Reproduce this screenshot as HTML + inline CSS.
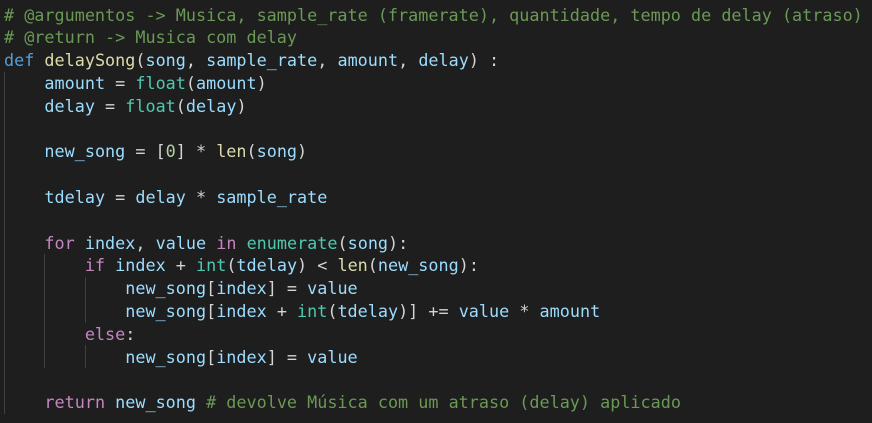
<!DOCTYPE html>
<html><head><meta charset="utf-8"><style>
html,body{margin:0;padding:0;background:#1e1e1e;width:872px;height:423px;overflow:hidden}
pre{margin:0;padding:3.6px 0 0 4px;font-family:"DejaVu Sans Mono","Liberation Mono",monospace;font-size:16.8px;line-height:22.8px;color:#d4d4d4;position:relative}
.c{color:#6a9955}.k{color:#569cd6}.f{color:#dcdcaa}.v{color:#9cdcfe}.b{color:#4ec9b0}.p{color:#c586c0}.n{color:#b5cea8}.y{color:#ffd700}
.g{position:absolute;width:1px;background:#404040}
</style></head><body>
<div class="g" style="left:4px;top:72px;height:342px"></div>
<div class="g" style="left:44px;top:254px;height:114px"></div>
<div class="g" style="left:85px;top:277px;height:46px"></div>
<div class="g" style="left:85px;top:345px;height:23px"></div>
<pre><span class="c"># @argumentos -&gt; Musica, sample_rate (framerate), quantidade, tempo de delay (atraso)</span>
<span class="c"># @return -&gt; Musica com delay</span>
<span class="k">def</span> <span class="f">delaySong</span>(<span class="v">song</span>, <span class="v">sample_rate</span>, <span class="v">amount</span>, <span class="v">delay</span>) :
    <span class="v">amount</span> = <span class="b">float</span>(<span class="v">amount</span>)
    <span class="v">delay</span> = <span class="b">float</span>(<span class="v">delay</span>)

    <span class="v">new_song</span> = [<span class="n">0</span>] * <span class="f">len</span>(<span class="v">song</span>)

    <span class="v">tdelay</span> = <span class="v">delay</span> * <span class="v">sample_rate</span>

    <span class="p">for</span> <span class="v">index</span>, <span class="v">value</span> <span class="p">in</span> <span class="b">enumerate</span>(<span class="v">song</span>):
        <span class="p">if</span> <span class="v">index</span> + <span class="b">int</span>(<span class="v">tdelay</span>) &lt; <span class="f">len</span>(<span class="v">new_song</span>):
            <span class="v">new_song</span>[<span class="v">index</span>] = <span class="v">value</span>
            <span class="v">new_song</span>[<span class="v">index</span> + <span class="b">int</span>(<span class="v">tdelay</span>)] += <span class="v">value</span> * <span class="v">amount</span>
        <span class="p">else</span>:
            <span class="v">new_song</span>[<span class="v">index</span>] = <span class="v">value</span>

    <span class="p">return</span> <span class="v">new_song</span> <span class="c"># devolve Música com um atraso (delay) aplicado</span>
</pre>
</body></html>
